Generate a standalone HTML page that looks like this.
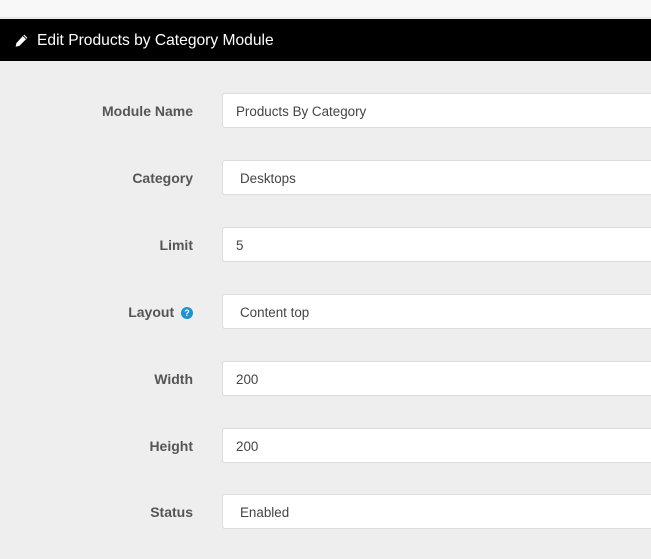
<!DOCTYPE html>
<html><head><style>
body{margin:0;width:651px;height:559px;overflow:hidden;background:#eeeeee;font-family:"Liberation Sans",sans-serif;position:relative}
.top{position:absolute;left:0;top:0;width:651px;height:17px;background:#f8f8f8;border-bottom:1px solid #e2e2e2}
.bar{position:absolute;left:0;top:19px;width:651px;height:42px;background:#000;color:#fff;font-size:15.6px;line-height:44px}
.bar span{position:absolute;left:37px}
.row{position:absolute;left:0;width:651px;height:35px}
.lbl{position:absolute;right:458px;top:1px;line-height:35px;font-size:14px;font-weight:bold;color:#555}
.in{position:absolute;left:222px;top:0;width:440px;height:33px;background:#fff;border:1px solid #ddd;border-radius:3px;font-size:13.4px;line-height:35px;color:#444;box-sizing:content-box}
.in span{position:absolute;left:13px}
.in.s span{left:17px}
.q{display:inline-block;width:12px;height:12px;border-radius:50%;background:#1e91cf;color:#fff;font-size:9px;line-height:12px;text-align:center;vertical-align:1px;margin-left:3px}
</style></head><body>
<div class="top"></div>
<div class="bar"><svg style="position:absolute;left:14px;top:14px" width="15" height="15" viewBox="0 0 14 14"><path d="M9.5 1.5l3 3-7.5 7.5-3.5.8.8-3.5z" fill="#fff"/><path d="M8.5 2.5l3 3" stroke="#000" stroke-width="0.8"/></svg><span>Edit Products by Category Module</span></div>
<div class="row" style="top:93px"><div class="lbl">Module Name</div><div class="in"><span>Products By Category</span></div></div>
<div class="row" style="top:160px"><div class="lbl">Category</div><div class="in s"><span>Desktops</span></div></div>
<div class="row" style="top:227px"><div class="lbl">Limit</div><div class="in"><span>5</span></div></div>
<div class="row" style="top:294px"><div class="lbl">Layout <span class="q">?</span></div><div class="in s"><span>Content top</span></div></div>
<div class="row" style="top:361px"><div class="lbl">Width</div><div class="in"><span>200</span></div></div>
<div class="row" style="top:428px"><div class="lbl">Height</div><div class="in"><span>200</span></div></div>
<div class="row" style="top:494px"><div class="lbl">Status</div><div class="in s"><span>Enabled</span></div></div>
</body></html>
